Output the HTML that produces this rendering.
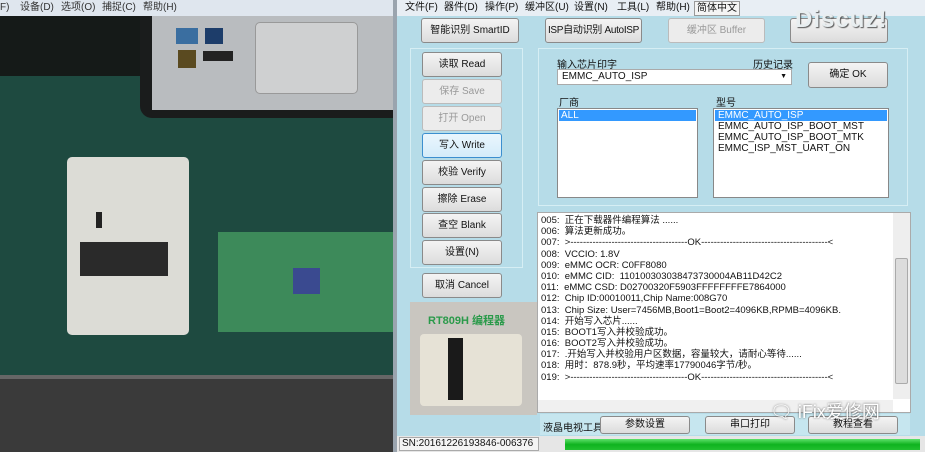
<!DOCTYPE html>
<html><head><meta charset="utf-8"><style>
*{margin:0;padding:0;box-sizing:border-box}
body{width:925px;height:452px;overflow:hidden;position:relative;background:#3a3a3a;font-family:"Liberation Sans","Noto Sans CJK SC",sans-serif;font-size:10px;color:#111}
.a{position:absolute}
.btn{position:absolute;background:linear-gradient(#f4f4f4,#dcdcdc);border:1px solid #8a8a8a;border-radius:3px;text-align:center;font-size:10px;color:#111;white-space:nowrap;overflow:hidden}
.dis{color:#999;background:#ececec;border-color:#bbb}
.log div{height:11.2px;line-height:11.2px;white-space:nowrap}
.m{position:absolute;top:0;line-height:16px;font-size:10px;white-space:nowrap}
</style></head><body>
<!-- left camera window -->
<div class="a" style="left:0;top:0;width:393px;height:16px;background:#dfe6ee;color:#333">
<span class="m" style="left:0">F)</span><span class="m" style="left:20px">设备(D)</span><span class="m" style="left:61px">选项(O)</span><span class="m" style="left:102px">捕捉(C)</span><span class="m" style="left:143px">帮助(H)</span></div>
<div class="a" style="left:0;top:16px;width:393px;height:359px;background:#1e4a40"></div>
<div class="a" style="left:0;top:16px;width:160px;height:60px;background:#151a18"></div>
<div class="a" style="left:140px;top:16px;width:253px;height:102px;background:#1a1c1c;border-radius:0 0 0 12px"></div>
<div class="a" style="left:152px;top:16px;width:241px;height:94px;background:#b9bcbf"></div>
<div class="a" style="left:255px;top:22px;width:103px;height:72px;background:#cfd0d1;border:1px solid #999;border-radius:5px"></div>
<div class="a" style="left:176px;top:28px;width:22px;height:16px;background:#3a6ea0"></div>
<div class="a" style="left:205px;top:28px;width:18px;height:16px;background:#1d3d6a"></div>
<div class="a" style="left:178px;top:50px;width:18px;height:18px;background:#5a4a20"></div>
<div class="a" style="left:203px;top:51px;width:30px;height:10px;background:#222"></div>
<div class="a" style="left:67px;top:157px;width:122px;height:178px;background:#dcdcd6;border-radius:5px"></div>
<div class="a" style="left:80px;top:242px;width:88px;height:34px;background:#2a2a2a"></div>
<div class="a" style="left:96px;top:212px;width:6px;height:16px;background:#222"></div>
<div class="a" style="left:218px;top:232px;width:175px;height:100px;background:#3d8a5a"></div>
<div class="a" style="left:293px;top:268px;width:27px;height:26px;background:#3a4a90"></div>
<div class="a" style="left:0;top:375px;width:393px;height:4px;background:#666"></div>
<div class="a" style="left:393px;top:0;width:4px;height:452px;background:#9aa4ae"></div>
<!-- app -->
<div class="a" style="left:397px;top:0;width:528px;height:452px;background:#b6dce8"></div>
<div class="a" style="left:397px;top:0;width:528px;height:16px;background:#e8eef4;color:#111">
<span class="m" style="left:8px">文件(F)</span><span class="m" style="left:47px">器件(D)</span><span class="m" style="left:88px">操作(P)</span><span class="m" style="left:128px">缓冲区(U)</span><span class="m" style="left:177px">设置(N)</span><span class="m" style="left:220px">工具(L)</span><span class="m" style="left:259px">帮助(H)</span><span class="m" style="left:297px;top:1px;line-height:13px;border:1px solid #999;background:#f4f4f4;padding:0 2px">简体中文</span></div>
<div class="btn" style="left:421px;top:18px;width:98px;height:25px;line-height:23px">智能识别 SmartID</div>
<div class="btn" style="left:545px;top:18px;width:97px;height:25px;line-height:23px;letter-spacing:-0.3px">ISP自动识别 AutoISP</div>
<div class="btn dis" style="left:668px;top:18px;width:97px;height:25px;line-height:23px">缓冲区 Buffer</div>
<div class="btn" style="left:790px;top:18px;width:98px;height:25px;line-height:23px"></div>
<div class="a" style="left:795px;top:6px;font-size:24px;font-weight:bold;color:#e8eef0;text-shadow:1px 1px 1px #555;letter-spacing:1px">Discuz!</div>
<div class="a" style="left:410px;top:48px;width:113px;height:220px;border:1px solid #d6eef4"></div>
<div class="btn" style="left:422px;top:52px;width:80px;height:25px;line-height:23px">读取 Read</div>
<div class="btn dis" style="left:422px;top:79px;width:80px;height:25px;line-height:23px">保存 Save</div>
<div class="btn dis" style="left:422px;top:106px;width:80px;height:25px;line-height:23px">打开 Open</div>
<div class="btn" style="left:422px;top:133px;width:80px;height:25px;line-height:23px;border-color:#3c8fcf;background:linear-gradient(#eaf6fd,#d4ecfa)">写入 Write</div>
<div class="btn" style="left:422px;top:160px;width:80px;height:25px;line-height:23px">校验 Verify</div>
<div class="btn" style="left:422px;top:187px;width:80px;height:25px;line-height:23px">擦除 Erase</div>
<div class="btn" style="left:422px;top:213px;width:80px;height:25px;line-height:23px">查空 Blank</div>
<div class="btn" style="left:422px;top:240px;width:80px;height:25px;line-height:23px">设置(N)</div>
<div class="btn" style="left:422px;top:273px;width:80px;height:25px;line-height:23px">取消 Cancel</div>
<div class="a" style="left:410px;top:302px;width:127px;height:113px;background:#c9c6c0"></div>
<div class="a" style="left:428px;top:312px;font-size:11px;font-weight:bold;color:#2a9a4a">RT809H 编程器</div>
<div class="a" style="left:420px;top:334px;width:102px;height:72px;background:#e6e2d6;border-radius:4px"></div>
<div class="a" style="left:448px;top:338px;width:15px;height:62px;background:#1a1a1a"></div>
<div class="a" style="left:538px;top:48px;width:370px;height:158px;border:1px solid #d6eef4"></div>
<div class="a" style="left:557px;top:56px">输入芯片印字</div>
<div class="a" style="left:753px;top:56px">历史记录</div>
<div class="a" style="left:557px;top:69px;width:235px;height:16px;background:#fff;border:1px solid #aaa;padding-left:4px;line-height:14px">EMMC_AUTO_ISP<span style="position:absolute;right:4px;font-size:7px">▼</span></div>
<div class="btn" style="left:808px;top:62px;width:80px;height:26px;line-height:24px">确定 OK</div>
<div class="a" style="left:559px;top:94px">厂商</div>
<div class="a" style="left:716px;top:94px">型号</div>
<div class="a" style="left:557px;top:108px;width:141px;height:90px;background:#fff;border:1px solid #888;padding:1px"><div style="background:#3399ff;color:#fff;height:11px;line-height:11px;padding-left:2px">ALL</div></div>
<div class="a" style="left:713px;top:108px;width:176px;height:90px;background:#fff;border:1px solid #888;padding:1px;line-height:11px"><div style="background:#3399ff;color:#fff;padding-left:3px">EMMC_AUTO_ISP</div><div style="padding-left:3px">EMMC_AUTO_ISP_BOOT_MST</div><div style="padding-left:3px">EMMC_AUTO_ISP_BOOT_MTK</div><div style="padding-left:3px">EMMC_ISP_MST_UART_ON</div></div>
<div class="a log" style="left:537px;top:212px;width:374px;height:201px;background:#fff;border:1px solid #aaa;padding:2px 0 0 3px;font-size:9.5px">
<div>005:&nbsp; 正在下载器件编程算法 ......</div>
<div>006:&nbsp; 算法更新成功。</div>
<div>007:&nbsp; &gt;-------------------------------------OK----------------------------------------&lt;</div>
<div>008:&nbsp; VCCIO: 1.8V</div>
<div>009:&nbsp; eMMC OCR: C0FF8080</div>
<div>010:&nbsp; eMMC CID:&nbsp; 110100303038473730004AB11D42C2</div>
<div>011:&nbsp; eMMC CSD: D02700320F5903FFFFFFFFE7864000</div>
<div>012:&nbsp; Chip ID:00010011,Chip Name:008G70</div>
<div>013:&nbsp; Chip Size: User=7456MB,Boot1=Boot2=4096KB,RPMB=4096KB.</div>
<div>014:&nbsp; 开始写入芯片......</div>
<div>015:&nbsp; BOOT1写入并校验成功。</div>
<div>016:&nbsp; BOOT2写入并校验成功。</div>
<div>017:&nbsp; .开始写入并校验用户区数据，容量较大，请耐心等待......</div>
<div>018:&nbsp; 用时：878.9秒，平均速率17790046字节/秒。</div>
<div>019:&nbsp; &gt;-------------------------------------OK----------------------------------------&lt;</div>
</div>
<div class="a" style="left:893px;top:213px;width:17px;height:186px;background:#eee"></div>
<div class="a" style="left:895px;top:258px;width:13px;height:126px;background:#dcdcdc;border:1px solid #aaa;border-radius:2px"></div>
<div class="a" style="left:538px;top:400px;width:355px;height:12px;background:#f0f0f0"></div>
<div class="a" style="left:540px;top:414px;width:370px;height:21px;background:#c6e6ef"></div>
<div class="a" style="left:543px;top:419px">液晶电视工具</div>
<div class="btn" style="left:600px;top:416px;width:90px;height:18px;line-height:16px">参数设置</div>
<div class="btn" style="left:705px;top:416px;width:90px;height:18px;line-height:16px">串口打印</div>
<div class="btn" style="left:808px;top:416px;width:90px;height:18px;line-height:16px">教程查看</div>
<div class="a" style="left:770px;top:398px;font-size:18px;color:#fff;text-shadow:0 0 2px #555">🗨 iFix爱修网</div>
<div class="a" style="left:397px;top:436px;width:528px;height:16px;background:#e6e6e6"></div>
<div class="a" style="left:399px;top:437px;width:140px;height:14px;background:#f4f4f4;border:1px solid #aaa;line-height:12px;padding-left:2px">SN:20161226193846-006376</div>
<div class="a" style="left:565px;top:439px;width:355px;height:11px;background:linear-gradient(#5ee06a,#0fb31f 50%,#22c030)"></div>
</body></html>
